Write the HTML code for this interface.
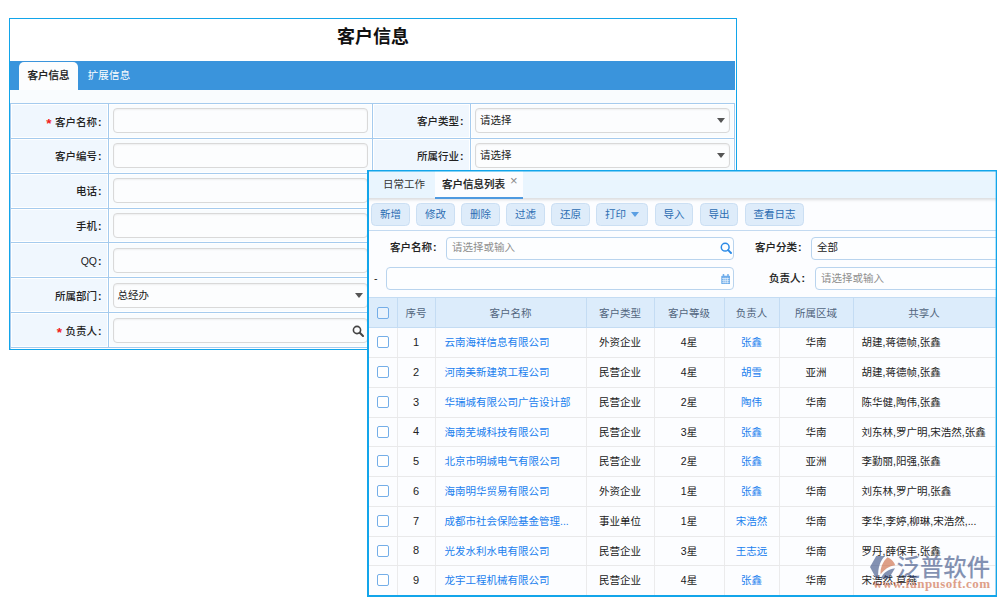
<!DOCTYPE html>
<html lang="zh-CN">
<head>
<meta charset="utf-8">
<title>客户信息</title>
<style>
*{box-sizing:border-box;margin:0;padding:0}
html,body{width:1000px;height:600px;overflow:hidden;background:#fff}
body{font-family:"Liberation Sans","Noto Sans CJK SC",sans-serif;font-size:10.5px;color:#222;position:relative}
.abs{position:absolute}
/* ---------- panel 1 ---------- */
#p1{position:absolute;left:9px;top:18px;width:728px;height:332px;border:1px solid #12a5ea;background:#fff;overflow:hidden}
#p1 .title{position:absolute;left:0;top:0;width:726px;height:42px;background:#fff;text-align:center;font-weight:bold;font-size:18px;line-height:36.5px;color:#111}
#p1 .tabbar{position:absolute;left:0;top:42px;width:725px;height:29px;background:#3a94dc}
#p1 .tab-a{position:absolute;left:9px;top:1px;width:59px;height:28px;background:#fcfdfe;border-radius:5px 5px 0 0;text-align:center;line-height:26px;font-size:10.5px;font-weight:500;-webkit-text-stroke:.2px #222;color:#222}
#p1 .tab-b{position:absolute;left:77px;top:1px;width:44px;height:28px;line-height:26px;letter-spacing:.15px;font-size:10.5px;color:#fff;text-align:center;white-space:nowrap}
#p1 .pad{position:absolute;left:0;top:71px;width:725px;height:13px;background:#f9fcfe}
#p1 .grid{position:absolute;left:0;top:84px;width:725px;height:246px;overflow:hidden;border-top:1px solid #a5cbee;border-left:1px solid #a5cbee}
.row{position:absolute;left:0;width:726px;height:35px}
.row>div{border-bottom:1px solid #a5cbee}
.lo .inp{top:5px}
.lo .lab{line-height:36px}
.lab{position:absolute;top:0;height:100%;box-shadow:inset 0 0 0 1px #fff;background:#f0f7fe;border-right:1px solid #a5cbee;text-align:right;line-height:35px;padding-right:6.5px;font-size:10.5px;font-weight:500;color:#222;white-space:nowrap}
.c{margin-left:1px;font-weight:bold}
.cell{position:absolute;top:0;height:100%;box-shadow:inset 0 0 0 1px #fff;border-right:1px solid #a5cbee;background:#f9fcfe}
.inp{position:absolute;left:4px;top:4px;height:25px;border:1px solid #d9d9d9;border-radius:4px;background:#fcfdfe;box-shadow:inset 0 1px 2px rgba(0,0,0,.06);line-height:23px;padding-left:5px;font-size:10.5px;color:#222}
.req{color:#f02020;font-weight:bold;font-size:13.5px;margin-right:3.5px;position:relative;top:2px;letter-spacing:0}
.caret{position:absolute;width:0;height:0;border-left:4px solid transparent;border-right:4px solid transparent;border-top:5px solid #555}
/* ---------- panel 2 ---------- */
#p2{position:absolute;left:367px;top:170px;width:630px;height:427px;border:2px solid #12a5ea;border-top-width:1px;border-right-width:1px;background:#fcfdff;overflow:hidden}
#p2::before{content:"";position:absolute;left:0;top:0;right:0;height:1px;background:rgba(18,165,234,.5);z-index:5}
#p2::after{content:"";position:absolute;right:0;top:0;bottom:0;width:1px;background:rgba(18,165,234,.3);z-index:5}
#p2 .tabs{position:absolute;left:0;top:0;width:627px;height:27px;background:#e9f5fe;z-index:2}
#p2 .t1{position:absolute;left:14px;top:0;height:27px;line-height:27px;font-size:10.5px;color:#333}
#p2 .t2{position:absolute;left:66px;top:0;width:88px;height:28px;background:#fcfdff;border-bottom:2px solid #4f9ae0;line-height:27px;font-size:10.5px;font-weight:500;-webkit-text-stroke:.2px #222;color:#222;padding-left:7px;white-space:nowrap}
#p2 .t2 i{position:absolute;left:75px;top:-4.5px;font-style:normal;font-weight:normal;font-size:13px;color:#8a8a8a;-webkit-text-stroke:0}
#p2 .tb{position:absolute;left:0;top:27px;width:627px;height:33px;background:#fcfdff;border-bottom:1px solid #c3daf1;box-shadow:inset 0 4px 3px -2px rgba(0,0,0,.13)}
.btn{position:absolute;top:5px;height:23px;background:#deecfa;border:1px solid #cbdff3;border-radius:4.5px;color:#2c6cb2;font-size:10.5px;line-height:20px;text-align:center;white-space:nowrap}
.flab{position:absolute;height:22px;line-height:20px;font-size:10.5px;font-weight:500;-webkit-text-stroke:.12px #222;color:#222;text-align:right;white-space:nowrap}
.finp{position:absolute;height:23px;border:1px solid #b9d4ee;border-radius:4px;background:#fdfeff;line-height:18.5px;padding-left:5px;font-size:10.5px;color:#222;white-space:nowrap}
.ph{color:#8e8e8e}
table{border-collapse:collapse;position:absolute;left:0;top:126px;width:626px;table-layout:fixed;font-size:10.5px}
th{height:30px;padding-bottom:1px;background:#dcecfb;border:1px solid #c4dcf3;border-left:none;font-weight:normal;color:#52657d;text-align:center}
td{padding-bottom:2px;border-bottom:1px solid #e9e9ea;border-right:1px solid #ebebec;text-align:center;color:#222;white-space:nowrap;overflow:hidden;background:#fcfdff}
td.l{text-align:left;padding-left:8px}
td.a{padding-left:9px}
td:nth-child(2){font-size:11px}
td.a,td.b{color:#1a80ee}
.cb{display:inline-block;width:12px;height:12px;border:1px solid #74aee8;border-radius:2px;background:#fff;vertical-align:middle}
</style>
</head>
<body>

<div id="p1">
  <div class="title">客户信息</div>
  <div class="tabbar">
    <div class="tab-a">客户信息</div>
    <div class="tab-b">扩展信息</div>
  </div>
  <div class="pad"></div>
  <div class="grid">
    <div class="row" style="top:0px;height:35px">
      <div class="lab" style="left:0;width:98px"><span class="req">*</span>客户名称<span class="c">:</span></div>
      <div class="cell" style="left:98px;width:264px"><div class="inp" style="width:255px"></div></div>
      <div class="lab" style="left:362px;width:98px">客户类型<span class="c">:</span></div>
      <div class="cell" style="left:460px;width:264px"><div class="inp" style="width:255px;padding-left:4px">请选择</div><div class="caret" style="left:246px;top:14px"></div></div>
    </div>
    <div class="row" style="top:35px;height:35px">
      <div class="lab" style="left:0;width:98px">客户编号<span class="c">:</span></div>
      <div class="cell" style="left:98px;width:264px"><div class="inp" style="width:255px"></div></div>
      <div class="lab" style="left:362px;width:98px">所属行业<span class="c">:</span></div>
      <div class="cell" style="left:460px;width:264px"><div class="inp" style="width:255px;padding-left:4px">请选择</div><div class="caret" style="left:246px;top:14px"></div></div>
    </div>
    <div class="row" style="top:70px;height:35px">
      <div class="lab" style="left:0;width:98px">电话<span class="c">:</span></div>
      <div class="cell" style="left:98px;width:264px"><div class="inp" style="width:255px"></div></div>
    </div>
    <div class="row" style="top:105px;height:34px">
      <div class="lab" style="left:0;width:98px">手机<span class="c">:</span></div>
      <div class="cell" style="left:98px;width:264px"><div class="inp" style="width:255px"></div></div>
    </div>
    <div class="row lo" style="top:139px;height:35px">
      <div class="lab" style="left:0;width:98px">QQ<span class="c">:</span></div>
      <div class="cell" style="left:98px;width:264px"><div class="inp" style="width:255px"></div></div>
    </div>
    <div class="row lo" style="top:174px;height:35px">
      <div class="lab" style="left:0;width:98px">所属部门<span class="c">:</span></div>
      <div class="cell" style="left:98px;width:264px"><div class="inp" style="width:255px;padding-left:3.5px">总经办</div><div class="caret" style="left:245.5px;top:15px"></div></div>
    </div>
    <div class="row lo" style="top:209px;height:35px">
      <div class="lab" style="left:0;width:98px"><span class="req">*</span>负责人<span class="c">:</span></div>
      <div class="cell" style="left:98px;width:264px"><div class="inp" style="width:255px"></div>
        <svg class="abs" style="left:243px;top:11.5px" width="12" height="12" viewBox="0 0 12 12"><circle cx="5" cy="5" r="3.6" fill="none" stroke="#444" stroke-width="1.6"/><path d="M7.8 7.8L11 11" stroke="#444" stroke-width="2" stroke-linecap="round"/></svg>
      </div>
    </div>
  </div>
</div>

<div id="p2">
  <div class="tabs">
    <div class="t1">日常工作</div>
    <div class="t2">客户信息列表<i>×</i></div>
  </div>
  <div class="tb">
    <div class="btn" style="left:2px;width:39px">新增</div>
    <div class="btn" style="left:47px;width:39px">修改</div>
    <div class="btn" style="left:92px;width:39px">删除</div>
    <div class="btn" style="left:137px;width:39px">过滤</div>
    <div class="btn" style="left:182px;width:39px">还原</div>
    <div class="btn" style="left:227px;width:52px;text-align:left;padding-left:8px">打印<span class="caret" style="left:34px;top:8px;border-top-color:#5b9fe3"></span></div>
    <div class="btn" style="left:286px;width:38px">导入</div>
    <div class="btn" style="left:331px;width:38px">导出</div>
    <div class="btn" style="left:376px;width:59px">查看日志</div>
  </div>
  <div class="flab" style="left:0;top:66px;width:67.5px">客户名称<span class="c">:</span></div>
  <div class="finp" style="left:77px;top:66px;width:288px"><span class="ph">请选择或输入</span>
    <svg class="abs" style="left:272.6px;top:4.4px" width="12" height="12" viewBox="0 0 12 12"><circle cx="5.2" cy="5.2" r="3.9" fill="none" stroke="#2b8ae6" stroke-width="1.5"/><path d="M8.2 8.2L11 11" stroke="#2b8ae6" stroke-width="1.9" stroke-linecap="round"/></svg>
  </div>
  <div class="flab" style="left:370px;top:66px;width:62.5px">客户分类<span class="c">:</span></div>
  <div class="finp" style="left:442px;top:66px;width:200px">全部</div>
  <div class="abs" style="left:5px;top:101px;font-size:10.5px">-</div>
  <div class="finp" style="left:17px;top:96px;width:348px;height:23px">
    <svg class="abs" style="left:333.6px;top:6px" width="9.5" height="10.4" viewBox="0 0 11 12"><rect x="0.3" y="2" width="10.4" height="9.7" rx="1" fill="#6fadea"/><rect x="2" y="0" width="1.8" height="3.4" rx=".6" fill="#6fadea"/><rect x="7.2" y="0" width="1.8" height="3.4" rx=".6" fill="#6fadea"/><path d="M1.3 5.2h8.4M1.3 7.4h8.4M1.3 9.6h8.4M3.4 4.2v6.6M5.5 4.2v6.6M7.6 4.2v6.6" stroke="#fff" stroke-width=".8" opacity=".85"/></svg>
  </div>
  <div class="flab" style="left:370px;top:97px;width:66px">负责人<span class="c">:</span></div>
  <div class="finp" style="left:446px;top:96px;width:200px;height:23px;line-height:20px"><span class="ph">请选择或输入</span></div>

  <table>
    <colgroup><col style="width:28px"><col style="width:38px"><col style="width:151px"><col style="width:68px"><col style="width:70px"><col style="width:55px"><col style="width:74px"><col style="width:142px"></colgroup>
    <tr><th><span class="cb" style="background:rgba(255,255,255,.35)"></span></th><th>序号</th><th>客户名称</th><th>客户类型</th><th>客户等级</th><th>负责人</th><th>所属区域</th><th>共享人</th></tr>
    <tr style="height:30px"><td><span class="cb"></span></td><td>1</td><td class="l a">云南海祥信息有限公司</td><td>外资企业</td><td>4星</td><td class="b">张鑫</td><td>华南</td><td class="l">胡建,蒋德帧,张鑫</td></tr>
    <tr style="height:30px"><td><span class="cb"></span></td><td>2</td><td class="l a">河南美新建筑工程公司</td><td>民营企业</td><td>4星</td><td class="b">胡雪</td><td>亚洲</td><td class="l">胡建,蒋德帧,张鑫</td></tr>
    <tr style="height:30px"><td><span class="cb"></span></td><td>3</td><td class="l a">华瑞城有限公司广告设计部</td><td>民营企业</td><td>2星</td><td class="b">陶伟</td><td>华南</td><td class="l">陈华健,陶伟,张鑫</td></tr>
    <tr style="height:29px"><td><span class="cb"></span></td><td>4</td><td class="l a">海南芜城科技有限公司</td><td>民营企业</td><td>3星</td><td class="b">张鑫</td><td>华南</td><td class="l">刘东林,罗广明,宋浩然,张鑫</td></tr>
    <tr style="height:30px"><td><span class="cb"></span></td><td>5</td><td class="l a">北京市明城电气有限公司</td><td>民营企业</td><td>2星</td><td class="b">张鑫</td><td>亚洲</td><td class="l">李勤丽,阳强,张鑫</td></tr>
    <tr style="height:30px"><td><span class="cb"></span></td><td>6</td><td class="l a">海南明华贸易有限公司</td><td>外资企业</td><td>1星</td><td class="b">张鑫</td><td>华南</td><td class="l">刘东林,罗广明,张鑫</td></tr>
    <tr style="height:30px"><td><span class="cb"></span></td><td>7</td><td class="l a">成都市社会保险基金管理...</td><td>事业单位</td><td>1星</td><td class="b">宋浩然</td><td>华南</td><td class="l">李华,李婷,柳琳,宋浩然,...</td></tr>
    <tr style="height:29px"><td><span class="cb"></span></td><td>8</td><td class="l a">光发水利水电有限公司</td><td>民营企业</td><td>3星</td><td class="b">王志远</td><td>华南</td><td class="l">罗丹,薛保丰,张鑫</td></tr>
    <tr style="height:30px"><td><span class="cb"></span></td><td>9</td><td class="l a">龙宇工程机械有限公司</td><td>民营企业</td><td>4星</td><td class="b">张鑫</td><td>华南</td><td class="l">宋浩然,草燕</td></tr>
  </table>

  <!-- watermark -->
  <div class="abs" style="left:501px;top:385px;width:124px;height:40px;opacity:.6">
    <svg class="abs" style="left:0;top:0" width="26" height="23" viewBox="0 0 26 23"><path d="M6.2 0H15C10.5 4.5 7.6 11 8.2 22.5H6.2L0 11z" fill="#344b80"/><path d="M17.5 1.2C21.5 2.8 24.5 6.5 25.2 9.2 19 10 14 13.5 10.6 18.6 10 12 12.8 5.5 17.5 1.2z" fill="#cb6139"/><path d="M25 12.2L18.8 22.5H10.8C13 17 18 13 25 12.2z" fill="#344b80"/></svg>
    <div class="abs" style="left:26.5px;top:-4.5px;font-size:23.4px;font-weight:500;line-height:32px;color:#344b80;white-space:nowrap">泛普软件</div>
    <div class="abs" style="left:3px;top:21px;font-family:'Liberation Serif',serif;font-weight:bold;font-size:13px;line-height:14px;color:#cb6139;white-space:nowrap;letter-spacing:.45px">www.fanpusoft.com</div>
  </div>
</div>

</body>
</html>
